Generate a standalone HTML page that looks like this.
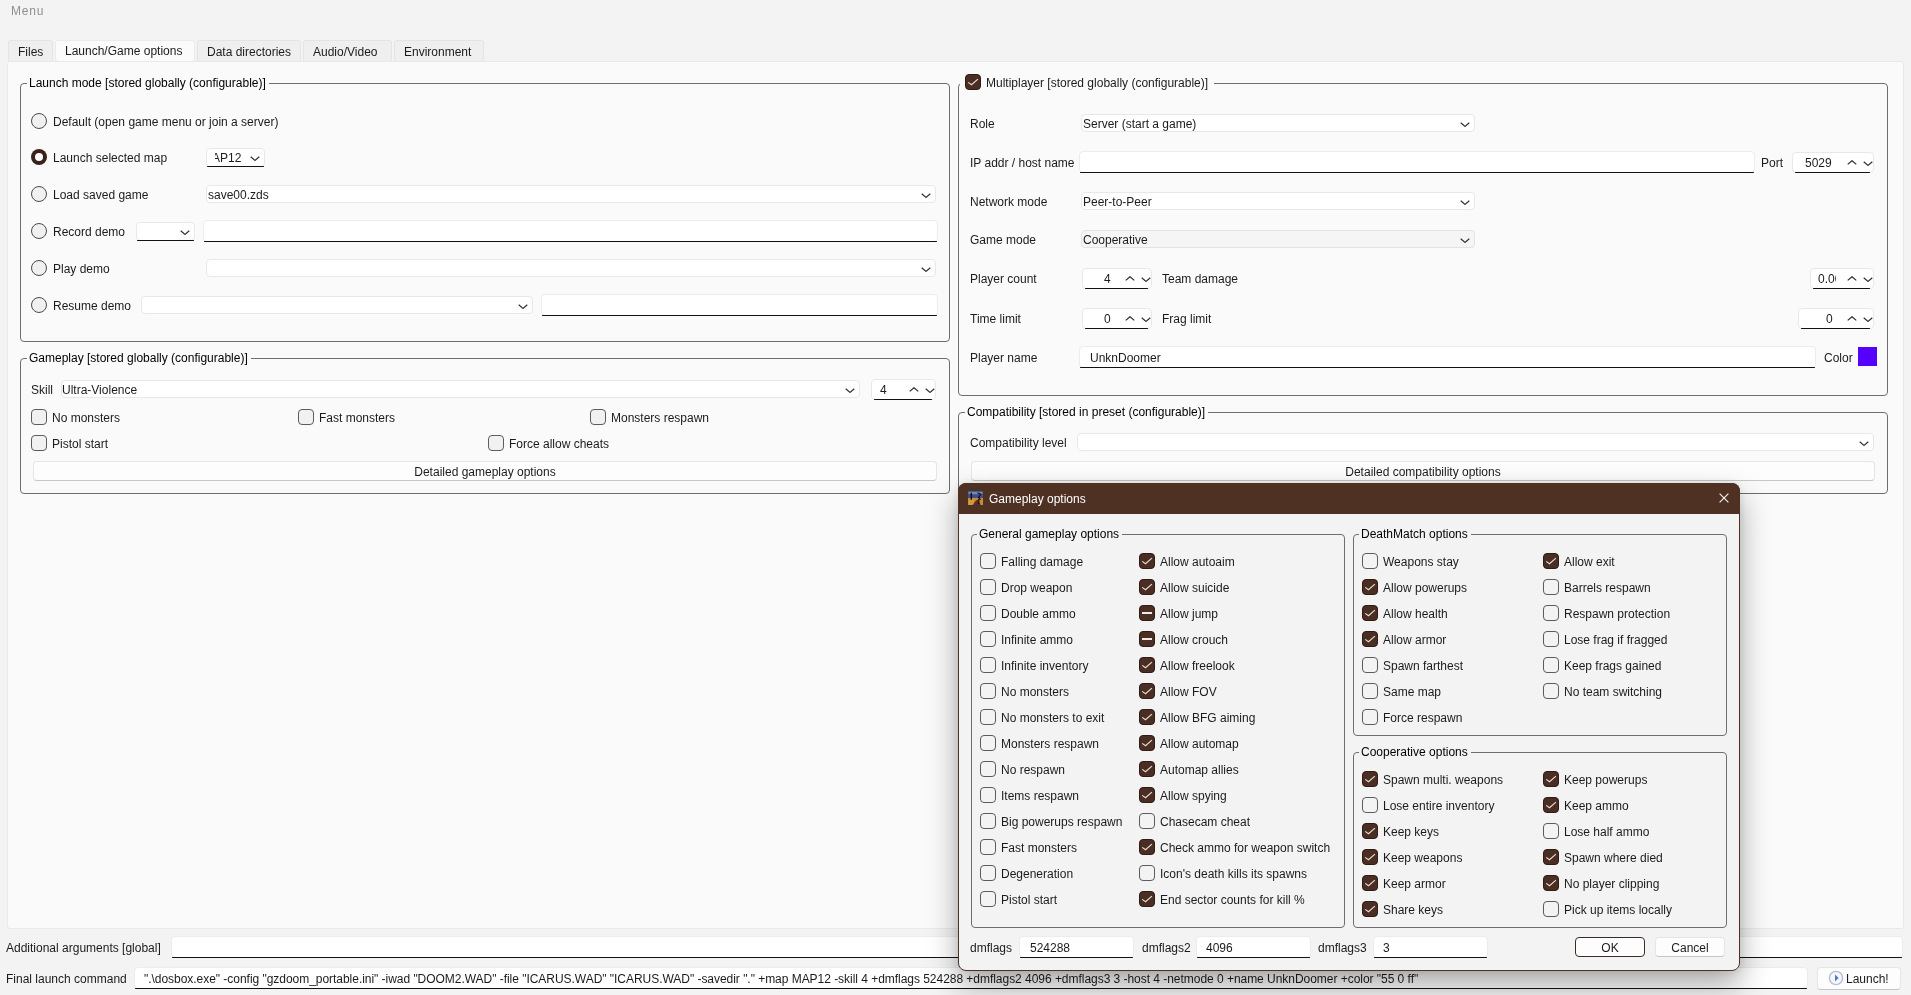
<!DOCTYPE html><html><head><meta charset="utf-8"><style>
*{margin:0;padding:0;box-sizing:border-box}
html,body{width:1911px;height:995px;overflow:hidden;background:#f3f3f3}
body{position:relative;font-family:"Liberation Sans",sans-serif;font-size:12px;-webkit-font-smoothing:antialiased}
.t{position:absolute;white-space:pre;line-height:14px;font-size:12px;will-change:transform}
.b{position:absolute}
</style></head><body>
<div class="t" style="left:10.5px;top:4px;color:#8f8f8f;letter-spacing:0.8px">Menu</div>
<div class="b" style="left:8px;top:40px;width:45px;height:22px;background:#efefef;border:1px solid #e4e4e4;border-radius:3px"></div>
<div class="t" style="left:18px;top:45px;color:#1b1b1b;">Files</div>
<div class="b" style="left:55px;top:40px;width:140px;height:22px;background:#fbfbfb;border:1px solid #ebebeb;border-radius:3px"></div>
<div class="t" style="left:65px;top:44px;color:#1b1b1b;">Launch/Game options</div>
<div class="b" style="left:197px;top:40px;width:104px;height:22px;background:#efefef;border:1px solid #e4e4e4;border-radius:3px"></div>
<div class="t" style="left:207px;top:45px;color:#1b1b1b;">Data directories</div>
<div class="b" style="left:303px;top:40px;width:89px;height:22px;background:#efefef;border:1px solid #e4e4e4;border-radius:3px"></div>
<div class="t" style="left:313px;top:45px;color:#1b1b1b;">Audio/Video</div>
<div class="b" style="left:394px;top:40px;width:90px;height:22px;background:#efefef;border:1px solid #e4e4e4;border-radius:3px"></div>
<div class="t" style="left:404px;top:45px;color:#1b1b1b;">Environment</div>
<div class="b" style="left:7px;top:61px;width:1897px;height:868px;background:#fafafa;border:1px solid #e9e9e9;border-radius:3px"></div>
<div class="b" style="left:20px;top:83px;width:930px;height:259px;border:1px solid #6e6e6e;border-radius:4px"></div>
<div class="t gt" style="left:27px;top:76px;background:#fafafa;padding:0 3px 0 2px">Launch mode [stored globally (configurable)]</div>
<svg class="b" style="left:31px;top:113px" width="16" height="16" viewBox="0 0 16 16"><circle cx="8" cy="8" r="7.5" fill="#f0f0f0" stroke="#4a4a4a" stroke-width="1"/></svg>
<div class="t" style="left:53px;top:115px;color:#1b1b1b;">Default (open game menu or join a server)</div>
<svg class="b" style="left:31px;top:149px" width="16" height="16" viewBox="0 0 16 16"><circle cx="8" cy="8" r="8" fill="#3a2119"/><circle cx="8" cy="8" r="4" fill="#ffffff"/></svg>
<div class="t" style="left:53px;top:151px;color:#1b1b1b;">Launch selected map</div>
<svg class="b" style="left:31px;top:186px" width="16" height="16" viewBox="0 0 16 16"><circle cx="8" cy="8" r="7.5" fill="#f0f0f0" stroke="#4a4a4a" stroke-width="1"/></svg>
<div class="t" style="left:53px;top:188px;color:#1b1b1b;">Load saved game</div>
<svg class="b" style="left:31px;top:223px" width="16" height="16" viewBox="0 0 16 16"><circle cx="8" cy="8" r="7.5" fill="#f0f0f0" stroke="#4a4a4a" stroke-width="1"/></svg>
<div class="t" style="left:53px;top:225px;color:#1b1b1b;">Record demo</div>
<svg class="b" style="left:31px;top:260px" width="16" height="16" viewBox="0 0 16 16"><circle cx="8" cy="8" r="7.5" fill="#f0f0f0" stroke="#4a4a4a" stroke-width="1"/></svg>
<div class="t" style="left:53px;top:262px;color:#1b1b1b;">Play demo</div>
<svg class="b" style="left:31px;top:297px" width="16" height="16" viewBox="0 0 16 16"><circle cx="8" cy="8" r="7.5" fill="#f0f0f0" stroke="#4a4a4a" stroke-width="1"/></svg>
<div class="t" style="left:53px;top:299px;color:#1b1b1b;">Resume demo</div>
<div class="b" style="left:206px;top:148px;width:59px;height:19px;background:#ffffff;border:1px solid #e8e8e8;border-radius:4px"></div>
<div class="b" style="left:207px;top:166px;width:57px;height:1px;background:#111111;border-radius:1px"></div>
<svg class="b" style="left:250.25px;top:155.7px" width="10" height="5" viewBox="0 0 10 5"><path d="M0.7 0.7 L5 4.4 L9.3 0.7" fill="none" stroke="#303030" stroke-width="1.2"/></svg>
<div class="b" style="left:215px;top:150px;width:30px;height:14px;overflow:hidden"><div class="t" style="left:-13px;top:1px;color:#1b1b1b">MAP12</div></div>
<div class="b" style="left:206px;top:185px;width:730px;height:18px;background:#ffffff;border:1px solid #e8e8e8;border-radius:4px"></div>
<div class="t" style="left:208px;top:188px;color:#1b1b1b;">save00.zds</div>
<svg class="b" style="left:921.25px;top:192.7px" width="10" height="5" viewBox="0 0 10 5"><path d="M0.7 0.7 L5 4.4 L9.3 0.7" fill="none" stroke="#303030" stroke-width="1.2"/></svg>
<div class="b" style="left:136px;top:222px;width:59px;height:19px;background:#ffffff;border:1px solid #e8e8e8;border-radius:4px"></div>
<div class="b" style="left:137px;top:240px;width:57px;height:1px;background:#111111;border-radius:1px"></div>
<svg class="b" style="left:180.25px;top:229.7px" width="10" height="5" viewBox="0 0 10 5"><path d="M0.7 0.7 L5 4.4 L9.3 0.7" fill="none" stroke="#303030" stroke-width="1.2"/></svg>
<div class="b" style="left:203px;top:220px;width:735px;height:22px;background:#ffffff;border:1px solid #ececec;border-radius:4px"></div>
<div class="b" style="left:204px;top:241px;width:733px;height:1px;background:#111111;border-radius:1px"></div>
<div class="b" style="left:206px;top:259px;width:730px;height:18px;background:#ffffff;border:1px solid #e8e8e8;border-radius:4px"></div>
<svg class="b" style="left:921.25px;top:266.7px" width="10" height="5" viewBox="0 0 10 5"><path d="M0.7 0.7 L5 4.4 L9.3 0.7" fill="none" stroke="#303030" stroke-width="1.2"/></svg>
<div class="b" style="left:141px;top:296px;width:392px;height:18px;background:#ffffff;border:1px solid #e8e8e8;border-radius:4px"></div>
<svg class="b" style="left:518.25px;top:303.7px" width="10" height="5" viewBox="0 0 10 5"><path d="M0.7 0.7 L5 4.4 L9.3 0.7" fill="none" stroke="#303030" stroke-width="1.2"/></svg>
<div class="b" style="left:541px;top:294px;width:397px;height:22px;background:#ffffff;border:1px solid #ececec;border-radius:4px"></div>
<div class="b" style="left:542px;top:315px;width:395px;height:1px;background:#111111;border-radius:1px"></div>
<div class="b" style="left:20px;top:358px;width:930px;height:136px;border:1px solid #6e6e6e;border-radius:4px"></div>
<div class="t gt" style="left:27px;top:351px;background:#fafafa;padding:0 3px 0 2px">Gameplay [stored globally (configurable)]</div>
<div class="t" style="left:31px;top:383px;color:#1b1b1b;">Skill</div>
<div class="b" style="left:61px;top:380px;width:799px;height:18px;background:#ffffff;border:1px solid #e8e8e8;border-radius:4px"></div>
<div class="t" style="left:62px;top:383px;color:#1b1b1b;">Ultra-Violence</div>
<svg class="b" style="left:845.25px;top:387.7px" width="10" height="5" viewBox="0 0 10 5"><path d="M0.7 0.7 L5 4.4 L9.3 0.7" fill="none" stroke="#303030" stroke-width="1.2"/></svg>
<div class="b" style="left:871px;top:379px;width:65px;height:21px;background:#ffffff;border:1px solid #e8e8e8;border-radius:4px"></div>
<div class="b" style="left:874px;top:399px;width:58px;height:1px;background:#111111;border-radius:1px"></div>
<div class="t" style="right:1024px;top:383px;color:#1b1b1b">4</div>
<svg class="b" style="left:909px;top:387.1px" width="10" height="5" viewBox="0 0 10 5"><path d="M0.7 4.4 L5 0.7 L9.3 4.4" fill="none" stroke="#303030" stroke-width="1.2"/></svg>
<svg class="b" style="left:925px;top:387.6px" width="10" height="5" viewBox="0 0 10 5"><path d="M0.7 0.7 L5 4.4 L9.3 0.7" fill="none" stroke="#303030" stroke-width="1.2"/></svg>
<div class="b" style="left:31px;top:409px;width:16px;height:16px;background:#f1f1f1;border:1px solid #5c5c5c;border-radius:4px"></div>
<div class="t" style="left:52px;top:411px;color:#1b1b1b;">No monsters</div>
<div class="b" style="left:298px;top:409px;width:16px;height:16px;background:#f1f1f1;border:1px solid #5c5c5c;border-radius:4px"></div>
<div class="t" style="left:319px;top:411px;color:#1b1b1b;">Fast monsters</div>
<div class="b" style="left:590px;top:409px;width:16px;height:16px;background:#f1f1f1;border:1px solid #5c5c5c;border-radius:4px"></div>
<div class="t" style="left:611px;top:411px;color:#1b1b1b;">Monsters respawn</div>
<div class="b" style="left:31px;top:435px;width:16px;height:16px;background:#f1f1f1;border:1px solid #5c5c5c;border-radius:4px"></div>
<div class="t" style="left:52px;top:437px;color:#1b1b1b;">Pistol start</div>
<div class="b" style="left:488px;top:435px;width:16px;height:16px;background:#f1f1f1;border:1px solid #5c5c5c;border-radius:4px"></div>
<div class="t" style="left:509px;top:437px;color:#1b1b1b;">Force allow cheats</div>
<div class="b" style="left:33px;top:461px;width:904px;height:20px;background:#fdfdfd;border:1px solid #e5e5e5;border-bottom-color:#c6c6c6;border-radius:4px"></div>
<div class="t" style="left:33px;width:904px;text-align:center;top:465px;color:#1b1b1b">Detailed gameplay options</div>
<div class="b" style="left:958px;top:83px;width:930px;height:313px;border:1px solid #6e6e6e;border-radius:4px"></div>
<div class="t gt" style="left:960px;top:76px;background:#fafafa;padding:0 3px 0 2px"></div>
<div class="b" style="left:960px;top:76px;width:254px;height:10px;background:#fafafa"></div>
<div class="b" style="left:965px;top:74px;width:16px;height:16px;background:#4b2e23;border:1px solid #2e1c15;border-radius:4px"></div>
<svg class="b" style="left:965px;top:74px" width="16" height="16" viewBox="0 0 16 16"><path d="M3.2 8.4 L6.5 10.8 L12.9 5.1" fill="none" stroke="#eadcd3" stroke-width="1.15"/></svg>
<div class="t" style="left:986px;top:76px;color:#1b1b1b;">Multiplayer [stored globally (configurable)]</div>
<div class="t" style="left:970px;top:117px;color:#1b1b1b;">Role</div>
<div class="b" style="left:1081px;top:114px;width:394px;height:18px;background:#ffffff;border:1px solid #e8e8e8;border-radius:4px"></div>
<div class="t" style="left:1083px;top:117px;color:#1b1b1b;">Server (start a game)</div>
<svg class="b" style="left:1460.25px;top:121.7px" width="10" height="5" viewBox="0 0 10 5"><path d="M0.7 0.7 L5 4.4 L9.3 0.7" fill="none" stroke="#303030" stroke-width="1.2"/></svg>
<div class="t" style="left:970px;top:156px;color:#1b1b1b;">IP addr / host name</div>
<div class="b" style="left:1079px;top:151px;width:676px;height:22px;background:#ffffff;border:1px solid #ececec;border-radius:4px"></div>
<div class="b" style="left:1080px;top:172px;width:674px;height:1px;background:#111111;border-radius:1px"></div>
<div class="t" style="left:1761px;top:156px;color:#1b1b1b;">Port</div>
<div class="b" style="left:1792px;top:152px;width:82px;height:21px;background:#ffffff;border:1px solid #e8e8e8;border-radius:4px"></div>
<div class="b" style="left:1795px;top:172px;width:75px;height:1px;background:#111111;border-radius:1px"></div>
<div class="t" style="right:79px;top:156px;color:#1b1b1b">5029</div>
<svg class="b" style="left:1847px;top:160.1px" width="10" height="5" viewBox="0 0 10 5"><path d="M0.7 4.4 L5 0.7 L9.3 4.4" fill="none" stroke="#303030" stroke-width="1.2"/></svg>
<svg class="b" style="left:1863px;top:160.6px" width="10" height="5" viewBox="0 0 10 5"><path d="M0.7 0.7 L5 4.4 L9.3 0.7" fill="none" stroke="#303030" stroke-width="1.2"/></svg>
<div class="t" style="left:970px;top:195px;color:#1b1b1b;">Network mode</div>
<div class="b" style="left:1081px;top:192px;width:394px;height:18px;background:#ffffff;border:1px solid #e8e8e8;border-radius:4px"></div>
<div class="t" style="left:1083px;top:195px;color:#1b1b1b;">Peer-to-Peer</div>
<svg class="b" style="left:1460.25px;top:199.7px" width="10" height="5" viewBox="0 0 10 5"><path d="M0.7 0.7 L5 4.4 L9.3 0.7" fill="none" stroke="#303030" stroke-width="1.2"/></svg>
<div class="t" style="left:970px;top:233px;color:#1b1b1b;">Game mode</div>
<div class="b" style="left:1081px;top:230px;width:394px;height:18px;background:#f5f5f5;border:1px solid #e2e2e2;border-radius:4px"></div>
<div class="t" style="left:1083px;top:233px;color:#1b1b1b;">Cooperative</div>
<svg class="b" style="left:1460.25px;top:237.7px" width="10" height="5" viewBox="0 0 10 5"><path d="M0.7 0.7 L5 4.4 L9.3 0.7" fill="none" stroke="#303030" stroke-width="1.2"/></svg>
<div class="t" style="left:970px;top:272px;color:#1b1b1b;">Player count</div>
<div class="b" style="left:1082px;top:268px;width:70px;height:21px;background:#ffffff;border:1px solid #e8e8e8;border-radius:4px"></div>
<div class="b" style="left:1085px;top:288px;width:63px;height:1px;background:#111111;border-radius:1px"></div>
<div class="t" style="right:800px;top:272px;color:#1b1b1b">4</div>
<svg class="b" style="left:1125px;top:276.1px" width="10" height="5" viewBox="0 0 10 5"><path d="M0.7 4.4 L5 0.7 L9.3 4.4" fill="none" stroke="#303030" stroke-width="1.2"/></svg>
<svg class="b" style="left:1141px;top:276.6px" width="10" height="5" viewBox="0 0 10 5"><path d="M0.7 0.7 L5 4.4 L9.3 0.7" fill="none" stroke="#303030" stroke-width="1.2"/></svg>
<div class="t" style="left:1162px;top:272px;color:#1b1b1b;">Team damage</div>
<div class="b" style="left:1810px;top:268px;width:64px;height:21px;background:#ffffff;border:1px solid #e8e8e8;border-radius:4px"></div>
<div class="b" style="left:1813px;top:288px;width:57px;height:1px;background:#111111;border-radius:1px"></div>
<div class="t" style="right:74px;top:272px;color:#1b1b1b"></div>
<svg class="b" style="left:1847px;top:276.1px" width="10" height="5" viewBox="0 0 10 5"><path d="M0.7 4.4 L5 0.7 L9.3 4.4" fill="none" stroke="#303030" stroke-width="1.2"/></svg>
<svg class="b" style="left:1863px;top:276.6px" width="10" height="5" viewBox="0 0 10 5"><path d="M0.7 0.7 L5 4.4 L9.3 0.7" fill="none" stroke="#303030" stroke-width="1.2"/></svg>
<div class="b" style="left:1816px;top:271px;width:20px;height:15px;overflow:hidden"><div class="t" style="left:2px;top:1px;color:#1b1b1b">0.00</div></div>
<div class="t" style="left:970px;top:312px;color:#1b1b1b;">Time limit</div>
<div class="b" style="left:1082px;top:308px;width:70px;height:21px;background:#ffffff;border:1px solid #e8e8e8;border-radius:4px"></div>
<div class="b" style="left:1085px;top:328px;width:63px;height:1px;background:#111111;border-radius:1px"></div>
<div class="t" style="right:800px;top:312px;color:#1b1b1b">0</div>
<svg class="b" style="left:1125px;top:316.1px" width="10" height="5" viewBox="0 0 10 5"><path d="M0.7 4.4 L5 0.7 L9.3 4.4" fill="none" stroke="#303030" stroke-width="1.2"/></svg>
<svg class="b" style="left:1141px;top:316.6px" width="10" height="5" viewBox="0 0 10 5"><path d="M0.7 0.7 L5 4.4 L9.3 0.7" fill="none" stroke="#303030" stroke-width="1.2"/></svg>
<div class="t" style="left:1162px;top:312px;color:#1b1b1b;">Frag limit</div>
<div class="b" style="left:1798px;top:308px;width:76px;height:21px;background:#ffffff;border:1px solid #e8e8e8;border-radius:4px"></div>
<div class="b" style="left:1801px;top:328px;width:69px;height:1px;background:#111111;border-radius:1px"></div>
<div class="t" style="right:78px;top:312px;color:#1b1b1b">0</div>
<svg class="b" style="left:1847px;top:316.1px" width="10" height="5" viewBox="0 0 10 5"><path d="M0.7 4.4 L5 0.7 L9.3 4.4" fill="none" stroke="#303030" stroke-width="1.2"/></svg>
<svg class="b" style="left:1863px;top:316.6px" width="10" height="5" viewBox="0 0 10 5"><path d="M0.7 0.7 L5 4.4 L9.3 0.7" fill="none" stroke="#303030" stroke-width="1.2"/></svg>
<div class="t" style="left:970px;top:351px;color:#1b1b1b;">Player name</div>
<div class="b" style="left:1079px;top:346px;width:737px;height:22px;background:#ffffff;border:1px solid #ececec;border-radius:4px"></div>
<div class="b" style="left:1080px;top:367px;width:735px;height:1px;background:#111111;border-radius:1px"></div>
<div class="t" style="left:1090px;top:351px;color:#1b1b1b;">UnknDoomer</div>
<div class="t" style="left:1824px;top:351px;color:#1b1b1b;">Color</div>
<div class="b" style="left:1858px;top:347px;width:19px;height:19px;background:#5500ff"></div>
<div class="b" style="left:958px;top:412px;width:930px;height:82px;border:1px solid #6e6e6e;border-radius:4px"></div>
<div class="t gt" style="left:965px;top:405px;background:#fafafa;padding:0 3px 0 2px">Compatibility [stored in preset (configurable)]</div>
<div class="t" style="left:970px;top:436px;color:#1b1b1b;">Compatibility level</div>
<div class="b" style="left:1077px;top:433px;width:797px;height:18px;background:#ffffff;border:1px solid #e8e8e8;border-radius:4px"></div>
<svg class="b" style="left:1859.25px;top:440.7px" width="10" height="5" viewBox="0 0 10 5"><path d="M0.7 0.7 L5 4.4 L9.3 0.7" fill="none" stroke="#303030" stroke-width="1.2"/></svg>
<div class="b" style="left:971px;top:461px;width:904px;height:20px;background:#fdfdfd;border:1px solid #e5e5e5;border-bottom-color:#c6c6c6;border-radius:4px"></div>
<div class="t" style="left:971px;width:904px;text-align:center;top:465px;color:#1b1b1b">Detailed compatibility options</div>
<div class="t" style="left:6px;top:941px;color:#1b1b1b;">Additional arguments [global]</div>
<div class="b" style="left:171px;top:936px;width:1732px;height:22px;background:#ffffff;border:1px solid #ececec;border-radius:4px"></div>
<div class="b" style="left:172px;top:957px;width:1730px;height:1px;background:#111111;border-radius:1px"></div>
<div class="t" style="left:6px;top:972px;color:#1b1b1b;">Final launch command</div>
<div class="b" style="left:134px;top:967px;width:1674px;height:22px;background:#ffffff;border:1px solid #ececec;border-radius:4px"></div>
<div class="b" style="left:135px;top:988px;width:1672px;height:1px;background:#111111;border-radius:1px"></div>
<div class="t" style="left:144px;top:972px;color:#1b1b1b;letter-spacing:-0.035px">&quot;.\dosbox.exe&quot; -config &quot;gzdoom_portable.ini&quot; -iwad &quot;DOOM2.WAD&quot; -file &quot;ICARUS.WAD&quot; &quot;ICARUS.WAD&quot; -savedir &quot;.&quot; +map MAP12 -skill 4 +dmflags 524288 +dmflags2 4096 +dmflags3 3 -host 4 -netmode 0 +name UnknDoomer +color &quot;55 0 ff&quot;</div>
<div class="b" style="left:1817px;top:967px;width:84px;height:23px;background:#fdfdfd;border:1px solid #e5e5e5;border-bottom-color:#c6c6c6;border-radius:4px"></div>
<div class="t" style="left:1817px;width:84px;text-align:center;top:972px;color:#1b1b1b"></div>
<svg class="b" style="left:1828px;top:969.5px" width="16" height="16" viewBox="0 0 16 16"><circle cx="8" cy="8" r="6.6" fill="#f4f7fc" stroke="#b4bfd6" stroke-width="1.4"/><path d="M7 4.6 L10.6 8 L7 11.4 Z" fill="#4a7dc2"/></svg>
<div class="t" style="left:1846px;top:972px;color:#1b1b1b;">Launch!</div>
<div class="b" style="left:958px;top:483px;width:782px;height:488px;background:#f3f3f3;border:1px solid #4f3124;border-radius:8px;box-shadow:0 14px 30px rgba(0,0,0,0.34),0 0 9px rgba(0,0,0,0.10)"></div>
<div class="b" style="left:958px;top:483px;width:782px;height:31px;background:#4f3124;border-radius:8px 8px 0 0"></div>
<svg class="b" style="left:967.5px;top:490.5px" width="15" height="14" viewBox="0 0 15 14"><path d="M0 0H15V7.5H0Z" fill="#3f4f82"/><path d="M0.5 0.8H14.5V3.2H0.5Z" fill="#8797c6" opacity="0.8"/><path d="M0 7H15V14H12.8L9.6 8.6L7.2 10.2L5 14H0Z" fill="#c98a33"/><path d="M0.5 8.5H6V11L3 14H0.5Z" fill="#dda04a" opacity="0.6"/><path d="M3.3 1.8V8.8" stroke="#0d0d18" stroke-width="1.4"/><path d="M10.8 7.5V13" stroke="#1a1008" stroke-width="1.2"/><path d="M9.5 1.8L12.8 3.3L10.6 6.2L12.5 9" fill="none" stroke="#0e1030" stroke-width="1.2"/></svg>
<div class="t" style="left:989px;top:492px;color:#ffffff;">Gameplay options</div>
<svg class="b" style="left:1719px;top:493px" width="10" height="10" viewBox="0 0 10 10"><path d="M0.6 0.6 L9.4 9.4 M9.4 0.6 L0.6 9.4" stroke="#f7efea" stroke-width="1.15"/></svg>
<div class="b" style="left:971px;top:534px;width:374px;height:394px;border:1px solid #6e6e6e;border-radius:4px"></div>
<div class="t gt" style="left:977px;top:527px;background:#f3f3f3;padding:0 3px 0 2px">General gameplay options</div>
<div class="b" style="left:1353px;top:534px;width:374px;height:202px;border:1px solid #6e6e6e;border-radius:4px"></div>
<div class="t gt" style="left:1359px;top:527px;background:#f3f3f3;padding:0 3px 0 2px">DeathMatch options</div>
<div class="b" style="left:1353px;top:752px;width:374px;height:176px;border:1px solid #6e6e6e;border-radius:4px"></div>
<div class="t gt" style="left:1359px;top:745px;background:#f3f3f3;padding:0 3px 0 2px">Cooperative options</div>
<div class="b" style="left:980px;top:553px;width:16px;height:16px;background:#f3f3f3;border:1px solid #5c5c5c;border-radius:4px"></div>
<div class="t" style="left:1001px;top:555px;color:#1b1b1b;">Falling damage</div>
<div class="b" style="left:980px;top:579px;width:16px;height:16px;background:#f3f3f3;border:1px solid #5c5c5c;border-radius:4px"></div>
<div class="t" style="left:1001px;top:581px;color:#1b1b1b;">Drop weapon</div>
<div class="b" style="left:980px;top:605px;width:16px;height:16px;background:#f3f3f3;border:1px solid #5c5c5c;border-radius:4px"></div>
<div class="t" style="left:1001px;top:607px;color:#1b1b1b;">Double ammo</div>
<div class="b" style="left:980px;top:631px;width:16px;height:16px;background:#f3f3f3;border:1px solid #5c5c5c;border-radius:4px"></div>
<div class="t" style="left:1001px;top:633px;color:#1b1b1b;">Infinite ammo</div>
<div class="b" style="left:980px;top:657px;width:16px;height:16px;background:#f3f3f3;border:1px solid #5c5c5c;border-radius:4px"></div>
<div class="t" style="left:1001px;top:659px;color:#1b1b1b;">Infinite inventory</div>
<div class="b" style="left:980px;top:683px;width:16px;height:16px;background:#f3f3f3;border:1px solid #5c5c5c;border-radius:4px"></div>
<div class="t" style="left:1001px;top:685px;color:#1b1b1b;">No monsters</div>
<div class="b" style="left:980px;top:709px;width:16px;height:16px;background:#f3f3f3;border:1px solid #5c5c5c;border-radius:4px"></div>
<div class="t" style="left:1001px;top:711px;color:#1b1b1b;">No monsters to exit</div>
<div class="b" style="left:980px;top:735px;width:16px;height:16px;background:#f3f3f3;border:1px solid #5c5c5c;border-radius:4px"></div>
<div class="t" style="left:1001px;top:737px;color:#1b1b1b;">Monsters respawn</div>
<div class="b" style="left:980px;top:761px;width:16px;height:16px;background:#f3f3f3;border:1px solid #5c5c5c;border-radius:4px"></div>
<div class="t" style="left:1001px;top:763px;color:#1b1b1b;">No respawn</div>
<div class="b" style="left:980px;top:787px;width:16px;height:16px;background:#f3f3f3;border:1px solid #5c5c5c;border-radius:4px"></div>
<div class="t" style="left:1001px;top:789px;color:#1b1b1b;">Items respawn</div>
<div class="b" style="left:980px;top:813px;width:16px;height:16px;background:#f3f3f3;border:1px solid #5c5c5c;border-radius:4px"></div>
<div class="t" style="left:1001px;top:815px;color:#1b1b1b;">Big powerups respawn</div>
<div class="b" style="left:980px;top:839px;width:16px;height:16px;background:#f3f3f3;border:1px solid #5c5c5c;border-radius:4px"></div>
<div class="t" style="left:1001px;top:841px;color:#1b1b1b;">Fast monsters</div>
<div class="b" style="left:980px;top:865px;width:16px;height:16px;background:#f3f3f3;border:1px solid #5c5c5c;border-radius:4px"></div>
<div class="t" style="left:1001px;top:867px;color:#1b1b1b;">Degeneration</div>
<div class="b" style="left:980px;top:891px;width:16px;height:16px;background:#f3f3f3;border:1px solid #5c5c5c;border-radius:4px"></div>
<div class="t" style="left:1001px;top:893px;color:#1b1b1b;">Pistol start</div>
<div class="b" style="left:1139px;top:553px;width:16px;height:16px;background:#4b2e23;border:1px solid #2e1c15;border-radius:4px"></div>
<svg class="b" style="left:1139px;top:553px" width="16" height="16" viewBox="0 0 16 16"><path d="M3.2 8.4 L6.5 10.8 L12.9 5.1" fill="none" stroke="#eadcd3" stroke-width="1.15"/></svg>
<div class="t" style="left:1160px;top:555px;color:#1b1b1b;">Allow autoaim</div>
<div class="b" style="left:1139px;top:579px;width:16px;height:16px;background:#4b2e23;border:1px solid #2e1c15;border-radius:4px"></div>
<svg class="b" style="left:1139px;top:579px" width="16" height="16" viewBox="0 0 16 16"><path d="M3.2 8.4 L6.5 10.8 L12.9 5.1" fill="none" stroke="#eadcd3" stroke-width="1.15"/></svg>
<div class="t" style="left:1160px;top:581px;color:#1b1b1b;">Allow suicide</div>
<div class="b" style="left:1139px;top:605px;width:16px;height:16px;background:#4b2e23;border:1px solid #2e1c15;border-radius:4px"></div>
<div class="b" style="left:1142px;top:612px;width:10px;height:1.6000000000000227px;background:#f3e9e5"></div>
<div class="t" style="left:1160px;top:607px;color:#1b1b1b;">Allow jump</div>
<div class="b" style="left:1139px;top:631px;width:16px;height:16px;background:#4b2e23;border:1px solid #2e1c15;border-radius:4px"></div>
<div class="b" style="left:1142px;top:638px;width:10px;height:1.6000000000000227px;background:#f3e9e5"></div>
<div class="t" style="left:1160px;top:633px;color:#1b1b1b;">Allow crouch</div>
<div class="b" style="left:1139px;top:657px;width:16px;height:16px;background:#4b2e23;border:1px solid #2e1c15;border-radius:4px"></div>
<svg class="b" style="left:1139px;top:657px" width="16" height="16" viewBox="0 0 16 16"><path d="M3.2 8.4 L6.5 10.8 L12.9 5.1" fill="none" stroke="#eadcd3" stroke-width="1.15"/></svg>
<div class="t" style="left:1160px;top:659px;color:#1b1b1b;">Allow freelook</div>
<div class="b" style="left:1139px;top:683px;width:16px;height:16px;background:#4b2e23;border:1px solid #2e1c15;border-radius:4px"></div>
<svg class="b" style="left:1139px;top:683px" width="16" height="16" viewBox="0 0 16 16"><path d="M3.2 8.4 L6.5 10.8 L12.9 5.1" fill="none" stroke="#eadcd3" stroke-width="1.15"/></svg>
<div class="t" style="left:1160px;top:685px;color:#1b1b1b;">Allow FOV</div>
<div class="b" style="left:1139px;top:709px;width:16px;height:16px;background:#4b2e23;border:1px solid #2e1c15;border-radius:4px"></div>
<svg class="b" style="left:1139px;top:709px" width="16" height="16" viewBox="0 0 16 16"><path d="M3.2 8.4 L6.5 10.8 L12.9 5.1" fill="none" stroke="#eadcd3" stroke-width="1.15"/></svg>
<div class="t" style="left:1160px;top:711px;color:#1b1b1b;">Allow BFG aiming</div>
<div class="b" style="left:1139px;top:735px;width:16px;height:16px;background:#4b2e23;border:1px solid #2e1c15;border-radius:4px"></div>
<svg class="b" style="left:1139px;top:735px" width="16" height="16" viewBox="0 0 16 16"><path d="M3.2 8.4 L6.5 10.8 L12.9 5.1" fill="none" stroke="#eadcd3" stroke-width="1.15"/></svg>
<div class="t" style="left:1160px;top:737px;color:#1b1b1b;">Allow automap</div>
<div class="b" style="left:1139px;top:761px;width:16px;height:16px;background:#4b2e23;border:1px solid #2e1c15;border-radius:4px"></div>
<svg class="b" style="left:1139px;top:761px" width="16" height="16" viewBox="0 0 16 16"><path d="M3.2 8.4 L6.5 10.8 L12.9 5.1" fill="none" stroke="#eadcd3" stroke-width="1.15"/></svg>
<div class="t" style="left:1160px;top:763px;color:#1b1b1b;">Automap allies</div>
<div class="b" style="left:1139px;top:787px;width:16px;height:16px;background:#4b2e23;border:1px solid #2e1c15;border-radius:4px"></div>
<svg class="b" style="left:1139px;top:787px" width="16" height="16" viewBox="0 0 16 16"><path d="M3.2 8.4 L6.5 10.8 L12.9 5.1" fill="none" stroke="#eadcd3" stroke-width="1.15"/></svg>
<div class="t" style="left:1160px;top:789px;color:#1b1b1b;">Allow spying</div>
<div class="b" style="left:1139px;top:813px;width:16px;height:16px;background:#f3f3f3;border:1px solid #5c5c5c;border-radius:4px"></div>
<div class="t" style="left:1160px;top:815px;color:#1b1b1b;">Chasecam cheat</div>
<div class="b" style="left:1139px;top:839px;width:16px;height:16px;background:#4b2e23;border:1px solid #2e1c15;border-radius:4px"></div>
<svg class="b" style="left:1139px;top:839px" width="16" height="16" viewBox="0 0 16 16"><path d="M3.2 8.4 L6.5 10.8 L12.9 5.1" fill="none" stroke="#eadcd3" stroke-width="1.15"/></svg>
<div class="t" style="left:1160px;top:841px;color:#1b1b1b;">Check ammo for weapon switch</div>
<div class="b" style="left:1139px;top:865px;width:16px;height:16px;background:#f3f3f3;border:1px solid #5c5c5c;border-radius:4px"></div>
<div class="t" style="left:1160px;top:867px;color:#1b1b1b;">Icon&#x27;s death kills its spawns</div>
<div class="b" style="left:1139px;top:891px;width:16px;height:16px;background:#4b2e23;border:1px solid #2e1c15;border-radius:4px"></div>
<svg class="b" style="left:1139px;top:891px" width="16" height="16" viewBox="0 0 16 16"><path d="M3.2 8.4 L6.5 10.8 L12.9 5.1" fill="none" stroke="#eadcd3" stroke-width="1.15"/></svg>
<div class="t" style="left:1160px;top:893px;color:#1b1b1b;">End sector counts for kill %</div>
<div class="b" style="left:1362px;top:553px;width:16px;height:16px;background:#f3f3f3;border:1px solid #5c5c5c;border-radius:4px"></div>
<div class="t" style="left:1383px;top:555px;color:#1b1b1b;">Weapons stay</div>
<div class="b" style="left:1362px;top:579px;width:16px;height:16px;background:#4b2e23;border:1px solid #2e1c15;border-radius:4px"></div>
<svg class="b" style="left:1362px;top:579px" width="16" height="16" viewBox="0 0 16 16"><path d="M3.2 8.4 L6.5 10.8 L12.9 5.1" fill="none" stroke="#eadcd3" stroke-width="1.15"/></svg>
<div class="t" style="left:1383px;top:581px;color:#1b1b1b;">Allow powerups</div>
<div class="b" style="left:1362px;top:605px;width:16px;height:16px;background:#4b2e23;border:1px solid #2e1c15;border-radius:4px"></div>
<svg class="b" style="left:1362px;top:605px" width="16" height="16" viewBox="0 0 16 16"><path d="M3.2 8.4 L6.5 10.8 L12.9 5.1" fill="none" stroke="#eadcd3" stroke-width="1.15"/></svg>
<div class="t" style="left:1383px;top:607px;color:#1b1b1b;">Allow health</div>
<div class="b" style="left:1362px;top:631px;width:16px;height:16px;background:#4b2e23;border:1px solid #2e1c15;border-radius:4px"></div>
<svg class="b" style="left:1362px;top:631px" width="16" height="16" viewBox="0 0 16 16"><path d="M3.2 8.4 L6.5 10.8 L12.9 5.1" fill="none" stroke="#eadcd3" stroke-width="1.15"/></svg>
<div class="t" style="left:1383px;top:633px;color:#1b1b1b;">Allow armor</div>
<div class="b" style="left:1362px;top:657px;width:16px;height:16px;background:#f3f3f3;border:1px solid #5c5c5c;border-radius:4px"></div>
<div class="t" style="left:1383px;top:659px;color:#1b1b1b;">Spawn farthest</div>
<div class="b" style="left:1362px;top:683px;width:16px;height:16px;background:#f3f3f3;border:1px solid #5c5c5c;border-radius:4px"></div>
<div class="t" style="left:1383px;top:685px;color:#1b1b1b;">Same map</div>
<div class="b" style="left:1362px;top:709px;width:16px;height:16px;background:#f3f3f3;border:1px solid #5c5c5c;border-radius:4px"></div>
<div class="t" style="left:1383px;top:711px;color:#1b1b1b;">Force respawn</div>
<div class="b" style="left:1543px;top:553px;width:16px;height:16px;background:#4b2e23;border:1px solid #2e1c15;border-radius:4px"></div>
<svg class="b" style="left:1543px;top:553px" width="16" height="16" viewBox="0 0 16 16"><path d="M3.2 8.4 L6.5 10.8 L12.9 5.1" fill="none" stroke="#eadcd3" stroke-width="1.15"/></svg>
<div class="t" style="left:1564px;top:555px;color:#1b1b1b;">Allow exit</div>
<div class="b" style="left:1543px;top:579px;width:16px;height:16px;background:#f3f3f3;border:1px solid #5c5c5c;border-radius:4px"></div>
<div class="t" style="left:1564px;top:581px;color:#1b1b1b;">Barrels respawn</div>
<div class="b" style="left:1543px;top:605px;width:16px;height:16px;background:#f3f3f3;border:1px solid #5c5c5c;border-radius:4px"></div>
<div class="t" style="left:1564px;top:607px;color:#1b1b1b;">Respawn protection</div>
<div class="b" style="left:1543px;top:631px;width:16px;height:16px;background:#f3f3f3;border:1px solid #5c5c5c;border-radius:4px"></div>
<div class="t" style="left:1564px;top:633px;color:#1b1b1b;">Lose frag if fragged</div>
<div class="b" style="left:1543px;top:657px;width:16px;height:16px;background:#f3f3f3;border:1px solid #5c5c5c;border-radius:4px"></div>
<div class="t" style="left:1564px;top:659px;color:#1b1b1b;">Keep frags gained</div>
<div class="b" style="left:1543px;top:683px;width:16px;height:16px;background:#f3f3f3;border:1px solid #5c5c5c;border-radius:4px"></div>
<div class="t" style="left:1564px;top:685px;color:#1b1b1b;">No team switching</div>
<div class="b" style="left:1362px;top:771px;width:16px;height:16px;background:#4b2e23;border:1px solid #2e1c15;border-radius:4px"></div>
<svg class="b" style="left:1362px;top:771px" width="16" height="16" viewBox="0 0 16 16"><path d="M3.2 8.4 L6.5 10.8 L12.9 5.1" fill="none" stroke="#eadcd3" stroke-width="1.15"/></svg>
<div class="t" style="left:1383px;top:773px;color:#1b1b1b;">Spawn multi. weapons</div>
<div class="b" style="left:1362px;top:797px;width:16px;height:16px;background:#f3f3f3;border:1px solid #5c5c5c;border-radius:4px"></div>
<div class="t" style="left:1383px;top:799px;color:#1b1b1b;">Lose entire inventory</div>
<div class="b" style="left:1362px;top:823px;width:16px;height:16px;background:#4b2e23;border:1px solid #2e1c15;border-radius:4px"></div>
<svg class="b" style="left:1362px;top:823px" width="16" height="16" viewBox="0 0 16 16"><path d="M3.2 8.4 L6.5 10.8 L12.9 5.1" fill="none" stroke="#eadcd3" stroke-width="1.15"/></svg>
<div class="t" style="left:1383px;top:825px;color:#1b1b1b;">Keep keys</div>
<div class="b" style="left:1362px;top:849px;width:16px;height:16px;background:#4b2e23;border:1px solid #2e1c15;border-radius:4px"></div>
<svg class="b" style="left:1362px;top:849px" width="16" height="16" viewBox="0 0 16 16"><path d="M3.2 8.4 L6.5 10.8 L12.9 5.1" fill="none" stroke="#eadcd3" stroke-width="1.15"/></svg>
<div class="t" style="left:1383px;top:851px;color:#1b1b1b;">Keep weapons</div>
<div class="b" style="left:1362px;top:875px;width:16px;height:16px;background:#4b2e23;border:1px solid #2e1c15;border-radius:4px"></div>
<svg class="b" style="left:1362px;top:875px" width="16" height="16" viewBox="0 0 16 16"><path d="M3.2 8.4 L6.5 10.8 L12.9 5.1" fill="none" stroke="#eadcd3" stroke-width="1.15"/></svg>
<div class="t" style="left:1383px;top:877px;color:#1b1b1b;">Keep armor</div>
<div class="b" style="left:1362px;top:901px;width:16px;height:16px;background:#4b2e23;border:1px solid #2e1c15;border-radius:4px"></div>
<svg class="b" style="left:1362px;top:901px" width="16" height="16" viewBox="0 0 16 16"><path d="M3.2 8.4 L6.5 10.8 L12.9 5.1" fill="none" stroke="#eadcd3" stroke-width="1.15"/></svg>
<div class="t" style="left:1383px;top:903px;color:#1b1b1b;">Share keys</div>
<div class="b" style="left:1543px;top:771px;width:16px;height:16px;background:#4b2e23;border:1px solid #2e1c15;border-radius:4px"></div>
<svg class="b" style="left:1543px;top:771px" width="16" height="16" viewBox="0 0 16 16"><path d="M3.2 8.4 L6.5 10.8 L12.9 5.1" fill="none" stroke="#eadcd3" stroke-width="1.15"/></svg>
<div class="t" style="left:1564px;top:773px;color:#1b1b1b;">Keep powerups</div>
<div class="b" style="left:1543px;top:797px;width:16px;height:16px;background:#4b2e23;border:1px solid #2e1c15;border-radius:4px"></div>
<svg class="b" style="left:1543px;top:797px" width="16" height="16" viewBox="0 0 16 16"><path d="M3.2 8.4 L6.5 10.8 L12.9 5.1" fill="none" stroke="#eadcd3" stroke-width="1.15"/></svg>
<div class="t" style="left:1564px;top:799px;color:#1b1b1b;">Keep ammo</div>
<div class="b" style="left:1543px;top:823px;width:16px;height:16px;background:#f3f3f3;border:1px solid #5c5c5c;border-radius:4px"></div>
<div class="t" style="left:1564px;top:825px;color:#1b1b1b;">Lose half ammo</div>
<div class="b" style="left:1543px;top:849px;width:16px;height:16px;background:#4b2e23;border:1px solid #2e1c15;border-radius:4px"></div>
<svg class="b" style="left:1543px;top:849px" width="16" height="16" viewBox="0 0 16 16"><path d="M3.2 8.4 L6.5 10.8 L12.9 5.1" fill="none" stroke="#eadcd3" stroke-width="1.15"/></svg>
<div class="t" style="left:1564px;top:851px;color:#1b1b1b;">Spawn where died</div>
<div class="b" style="left:1543px;top:875px;width:16px;height:16px;background:#4b2e23;border:1px solid #2e1c15;border-radius:4px"></div>
<svg class="b" style="left:1543px;top:875px" width="16" height="16" viewBox="0 0 16 16"><path d="M3.2 8.4 L6.5 10.8 L12.9 5.1" fill="none" stroke="#eadcd3" stroke-width="1.15"/></svg>
<div class="t" style="left:1564px;top:877px;color:#1b1b1b;">No player clipping</div>
<div class="b" style="left:1543px;top:901px;width:16px;height:16px;background:#f3f3f3;border:1px solid #5c5c5c;border-radius:4px"></div>
<div class="t" style="left:1564px;top:903px;color:#1b1b1b;">Pick up items locally</div>
<div class="t" style="left:970px;top:941px;color:#1b1b1b;">dmflags</div>
<div class="b" style="left:1019px;top:936px;width:115px;height:22px;background:#ffffff;border:1px solid #ececec;border-radius:4px"></div>
<div class="b" style="left:1020px;top:957px;width:113px;height:1px;background:#111111;border-radius:1px"></div>
<div class="t" style="left:1030px;top:941px;color:#1b1b1b;">524288</div>
<div class="t" style="left:1142px;top:941px;color:#1b1b1b;">dmflags2</div>
<div class="b" style="left:1196px;top:936px;width:115px;height:22px;background:#ffffff;border:1px solid #ececec;border-radius:4px"></div>
<div class="b" style="left:1197px;top:957px;width:113px;height:1px;background:#111111;border-radius:1px"></div>
<div class="t" style="left:1206px;top:941px;color:#1b1b1b;">4096</div>
<div class="t" style="left:1318px;top:941px;color:#1b1b1b;">dmflags3</div>
<div class="b" style="left:1373px;top:936px;width:115px;height:22px;background:#ffffff;border:1px solid #ececec;border-radius:4px"></div>
<div class="b" style="left:1374px;top:957px;width:113px;height:1px;background:#111111;border-radius:1px"></div>
<div class="t" style="left:1383px;top:941px;color:#1b1b1b;">3</div>
<div class="b" style="left:1575px;top:937px;width:70px;height:20px;background:#fdfdfd;border:1px solid #3a2d27;border-radius:4px"></div>
<div class="t" style="left:1575px;width:70px;text-align:center;top:941px;color:#1b1b1b">OK</div>
<div class="b" style="left:1655px;top:937px;width:70px;height:20px;background:#fdfdfd;border:1px solid #e5e5e5;border-bottom-color:#c6c6c6;border-radius:4px"></div>
<div class="t" style="left:1655px;width:70px;text-align:center;top:941px;color:#1b1b1b">Cancel</div>
</body></html>
